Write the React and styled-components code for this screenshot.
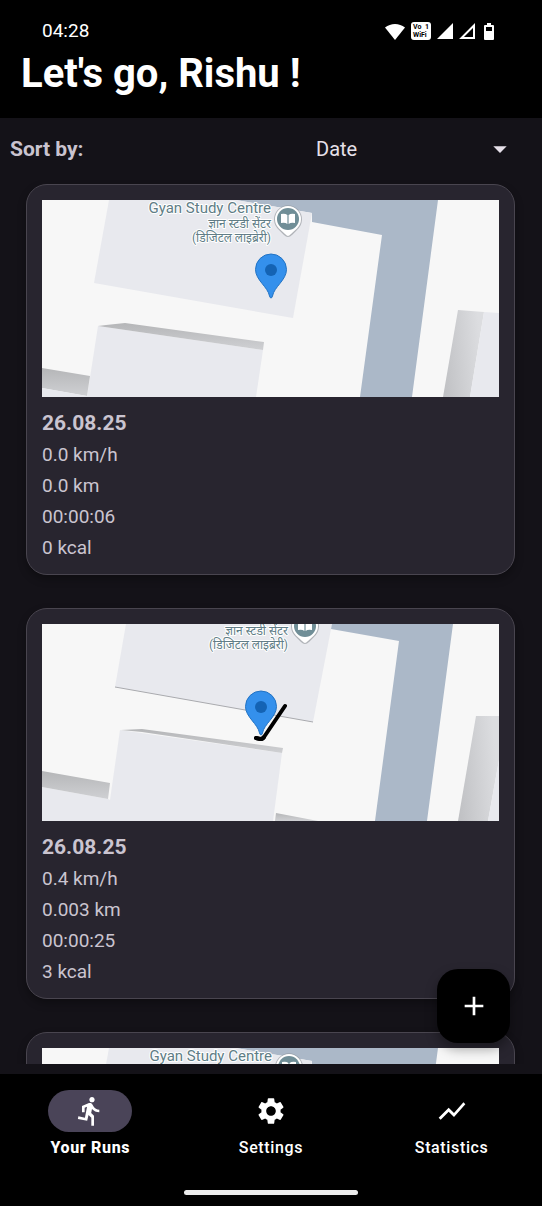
import React, { useState } from "react";
import styled, { createGlobalStyle } from "styled-components";
import { MdAdd, MdArrowDropDown, MdDirectionsRun, MdSettings, MdShowChart } from "react-icons/md";

const color = {
  bar: "#000000",
  page: "#141218",
  card: "#28252f",
  outline: "#49454f",
  text: "#cac4d0",
  bright: "#e6e0e9",
  pill: "#4a4458",
};

const GlobalStyle = createGlobalStyle`
  *, *::before, *::after { box-sizing: border-box; }
  body {
    margin: 0;
    background: ${color.page};
    color: ${color.text};
    font-family: Roboto, "Noto Sans", sans-serif;
  }
`;

const Shell = styled.div`
  display: flex;
  flex-direction: column;
  height: 100vh;
  overflow: hidden;
`;

const Header = styled.header`
  background: ${color.bar};
  color: #fff;
  padding: 20px 0 20px;
`;

const StatusBar = styled.div`
  display: flex;
  align-items: center;
  justify-content: space-between;
  height: 22px;
  padding: 0 48px 0 42px;
`;

const Clock = styled.time`
  font-size: 19px;
  line-height: 22px;
  font-weight: 400;
`;

const StatusIcons = styled.div`
  display: flex;
  align-items: center;
  gap: 6px;
  svg { display: block; }
`;

const CallBadge = styled.div`
  width: 20px;
  height: 18px;
  padding: 1px 2px;
  border-radius: 3px;
  background: #fff;
  color: #000;
  font-size: 7px;
  line-height: 8px;
  font-weight: 700;
`;

const BadgeLine = styled.div`
  display: flex;
  justify-content: space-between;
`;

const Title = styled.h1`
  margin: 8px 0 0;
  padding: 0 21px;
  font-size: 40px;
  line-height: 48px;
  font-weight: 700;
`;

const Main = styled.main`
  position: relative;
  display: flex;
  flex: 1;
  flex-direction: column;
  min-height: 0;
  padding-bottom: 10px;
`;

const SortRow = styled.div`
  display: flex;
  align-items: center;
  justify-content: space-between;
  height: 62px;
  flex-shrink: 0;
  padding: 0 26px 0 10px;
`;

const SortLabel = styled.label`
  font-size: 21px;
  line-height: 28px;
  font-weight: 700;
`;

const SelectBox = styled.div`
  display: grid;
  grid-template-columns: 1fr 32px;
  align-items: center;
  width: 200px;
  color: ${color.bright};
  svg {
    grid-area: 1 / 2;
    pointer-events: none;
  }
`;

const SortSelect = styled.select`
  grid-area: 1 / 1 / 2 / 3;
  appearance: none;
  height: 40px;
  padding: 0;
  border: 0;
  background: transparent;
  color: inherit;
  font: 400 20px/28px Roboto, sans-serif;
`;

const RunList = styled.ul`
  display: flex;
  flex: 1;
  flex-direction: column;
  gap: 33px;
  min-height: 0;
  margin: 0;
  padding: 4px 27px 16px 26px;
  overflow-y: auto;
  scrollbar-width: none;
  list-style: none;
`;

const RunCard = styled.li`
  flex-shrink: 0;
  padding: 15px 15px 11px;
  border: 1px solid ${color.outline};
  border-radius: 21px;
  background: ${color.card};
  box-shadow: 0 4px 8px rgba(0, 0, 0, 0.3);
`;

const MapFrame = styled.svg`
  display: block;
  width: 100%;
  aspect-ratio: 457 / 197;
  margin-bottom: 10px;
`;

const MapText = styled.text`
  fill: #607d86;
  stroke: #fff;
  stroke-width: 2px;
  stroke-linejoin: round;
  paint-order: stroke;
  text-anchor: end;
  font-family: Roboto, "Noto Sans", "Noto Sans Devanagari", sans-serif;
  font-size: ${(p) => (p.$small ? 12 : 15)}px;
`;

const RunDate = styled.h2`
  margin: 0;
  font-size: 21px;
  line-height: 32px;
  font-weight: 700;
`;

const Stat = styled.p`
  margin: 0;
  font-size: 19px;
  line-height: 31px;
`;

const AddButton = styled.button`
  position: absolute;
  right: 32px;
  bottom: 31px;
  display: grid;
  place-items: center;
  width: 73px;
  height: 74px;
  padding: 0;
  border: 0;
  border-radius: 21px;
  background: ${color.bar};
  color: #fff;
  box-shadow: 0 6px 12px rgba(0, 0, 0, 0.35);
`;

const BottomBar = styled.footer`
  background: ${color.bar};
  padding: 16px 0 11px;
`;

const Tabs = styled.nav`
  display: grid;
  grid-template-columns: repeat(3, 1fr);
`;

const Tab = styled.a`
  display: flex;
  flex-direction: column;
  align-items: center;
  gap: 5px;
  color: #fff;
  font-size: 16px;
  line-height: 22px;
  font-weight: ${(p) => (p.$active ? 800 : 500)};
  letter-spacing: 0.04em;
  text-decoration: none;
`;

const TabIcon = styled.span`
  display: grid;
  place-items: center;
  width: 84px;
  height: 42px;
  border-radius: 21px;
  background: ${(p) => (p.$active ? color.pill : "transparent")};
`;

const HomeHandle = styled.div`
  width: 32%;
  height: 5px;
  margin: 31px auto 0;
  border-radius: 3px;
  background: #ececec;
`;

const firstMap = {
  shapes: [
    ["road", "194,0 396,0 370,197 318,197 340,35 270,22 270,13"],
    ["block", "67,0 194,0 270,13 251,118 52,83"],
    ["block", "56,126 221,150 214,197 45,197"],
    ["wallTop", "56,126 64,125 83,123 222,142 221,150"],
    ["wallTop", "0,168 48,176 45,196 0,188"],
    ["block", "0,188 45,196 45,197 0,197"],
    ["wallSide", "416,110 442,112 428,197 401,197"],
    ["block", "442,112 457,113 457,197 428,197"],
  ],
  label: { x: 229, y: 13, name: "Gyan Study Centre", local: ["ज्ञान स्टडी सेंटर", "(डिजिटल लाइब्रेरी)"] },
  pin: { x: 229, y: 54 },
};

const secondMap = {
  shapes: [
    ["road", "289,0 411,0 385,197 333,197 357,17 289,5"],
    ["block", "84,0 290,0 271,98 73,63"],
    ["block", "0,163 66,175 110,197 0,197"],
    ["block", "78,106 240,129 231,197 65,197"],
    ["wallTop", "79,106 100,105 241,124 240,129 100,108"],
    ["wallTop", "0,147 68,159 66,175 0,163"],
    ["wallTop", "234,189 276,197 233,197"],
    ["wallSide", "434,92 457,92 457,136 446,197 416,197"],
    ["block", "457,136 457,197 446,197"],
  ],
  edge: "M73 63 271 98",
  label: { x: 246, y: -4, local: ["ज्ञान स्टडी सेंटर", "(डिजिटल लाइब्रेरी)"] },
  pin: { x: 219, y: 67 },
  route: "M243 82 222 113Q221 115 218 115L214 114",
};

const runs = [
  { id: 1, map: firstMap, date: "26.08.25", stats: ["0.0 km/h", "0.0 km", "00:00:06", "0 kcal"] },
  { id: 2, map: secondMap, date: "26.08.25", stats: ["0.4 km/h", "0.003 km", "00:00:25", "3 kcal"] },
  { id: 3, map: { ...firstMap, label: { x: 230, y: 13, name: "Gyan Study Centre", local: [] } }, stats: [] },
];

function RunMap({ id, map }) {
  const fills = {
    road: "#abb8c8",
    block: "#e8e9ee",
    wallTop: `url(#top${id})`,
    wallSide: `url(#side${id})`,
  };
  const { label, pin } = map;
  return (
    <MapFrame viewBox="0 0 457 197" role="img" aria-label="Run map">
      <defs>
        <linearGradient id={`top${id}`} x1="0" y1="0" x2="0" y2="1">
          <stop offset="0" stopColor="#b5b6b8" />
          <stop offset="1" stopColor="#cfd0d3" />
        </linearGradient>
        <linearGradient id={`side${id}`} x1="0" y1="1" x2="1" y2="0.8">
          <stop offset="0" stopColor="#bfc0c3" />
          <stop offset="1" stopColor="#dcdde0" />
        </linearGradient>
      </defs>
      <rect width="457" height="197" fill="#f7f7f7" />
      {map.shapes.map(([kind, points]) => (
        <polygon key={points} points={points} fill={fills[kind]} />
      ))}
      {map.edge && <path d={map.edge} stroke="#a9aaae" strokeWidth="1" />}
      {label.name && <MapText x={label.x} y={label.y}>{label.name}</MapText>}
      {label.local.map((line, i) => (
        <MapText key={line} x={label.x} y={label.y + 15 + i * 14} $small>{line}</MapText>
      ))}
      <g transform={`translate(${label.x + 17} ${label.y + 6})`}>
        <path d="M0 18Q-2 18-4 16L-9 11A14 14 0 1 1 9 11L4 16Q2 18 0 18Z" fill="#8b9094" opacity="0.6" />
        <path d="M0 17Q-1 17-3 15L-9 9.500A13 13 0 1 1 9 9.500L3 15Q1 17 0 17Z" fill="#fff" />
        <circle r="11" fill="#708e97" />
        <path d="M-7-5Q-3-6-0.600-4V5Q-3 3-7 4ZM7-5Q3-6 0.600-4V5Q3 3 7 4Z" fill="#fff" />
      </g>
      {map.route && (
        <path d={map.route} fill="none" stroke="#000" strokeWidth="4" strokeLinecap="round" strokeLinejoin="round" />
      )}
      <g transform={`translate(${pin.x} ${pin.y})`}>
        <path
          d="M0 44Q-1 44-1.500 42C-3 33-15.500 26-15.500 15.500A15.500 15.500 0 0 1 15.500 15.500C15.500 26 3 33 1.500 42Q1 44 0 44Z"
          fill="#3490ec"
          stroke="#2273c4"
          strokeWidth="1"
        />
        <circle cy="16" r="6" fill="#1463b4" />
      </g>
      {map.route && (
        <path d="M222 113Q221 115 218 115L214 114" fill="none" stroke="#000" strokeWidth="4" strokeLinecap="round" />
      )}
    </MapFrame>
  );
}

function PhoneStatus() {
  return (
    <StatusBar>
      <Clock>04:28</Clock>
      <StatusIcons>
        <svg width="20" height="17" viewBox="0 0 20 17" aria-hidden="true">
          <path d="M10 17 0 4.500Q4.500 1 10 1T20 4.500Z" fill="#fff" />
        </svg>
        <CallBadge>
          <BadgeLine><span>Vo</span><span>1</span></BadgeLine>
          <BadgeLine>WiFi</BadgeLine>
        </CallBadge>
        <svg width="16" height="17" viewBox="0 0 16 17" aria-hidden="true">
          <path d="M16 0V16H0Z" fill="#fff" />
        </svg>
        <svg width="16" height="17" viewBox="0 0 16 17" aria-hidden="true">
          <path d="M15 2.500V15H2.500Z" fill="none" stroke="#fff" strokeWidth="2" />
        </svg>
        <svg width="13" height="17" viewBox="0 0 13 17" aria-hidden="true">
          <path
            d="M6 0H10V2H12Q13 2 13 3V16Q13 17 12 17H4Q3 17 3 16V3Q3 2 4 2H6ZM5 4V8H11V4Z"
            fill="#fff"
            fillRule="evenodd"
          />
        </svg>
      </StatusIcons>
    </StatusBar>
  );
}

const tabs = [
  { name: "Your Runs", href: "#runs", Icon: MdDirectionsRun },
  { name: "Settings", href: "#settings", Icon: MdSettings },
  { name: "Statistics", href: "#statistics", Icon: MdShowChart },
];

export default function App() {
  const [sort, setSort] = useState("Date");
  const [current, setCurrent] = useState("Your Runs");
  return (
    <Shell>
      <GlobalStyle />
      <Header>
        <PhoneStatus />
        <Title>Let's go, Rishu !</Title>
      </Header>
      <Main>
        <SortRow>
          <SortLabel htmlFor="sort">Sort by:</SortLabel>
          <SelectBox>
            <SortSelect id="sort" value={sort} onChange={(e) => setSort(e.target.value)}>
              <option>Date</option>
              <option>Running Time</option>
              <option>Distance</option>
              <option>Average Speed</option>
              <option>Calories Burned</option>
            </SortSelect>
            <MdArrowDropDown size={32} aria-hidden="true" />
          </SelectBox>
        </SortRow>
        <RunList>
          {runs.map((run) => (
            <RunCard key={run.id}>
              <RunMap id={run.id} map={run.map} />
              {run.date && <RunDate>{run.date}</RunDate>}
              {run.stats.map((stat) => (
                <Stat key={stat}>{stat}</Stat>
              ))}
            </RunCard>
          ))}
        </RunList>
        <AddButton type="button" aria-label="Add run">
          <MdAdd size={32} />
        </AddButton>
      </Main>
      <BottomBar>
        <Tabs>
          {tabs.map(({ name, href, Icon }) => (
            <Tab key={name} href={href} $active={name === current} onClick={() => setCurrent(name)}>
              <TabIcon $active={name === current}>
                <Icon size={32} />
              </TabIcon>
              {name}
            </Tab>
          ))}
        </Tabs>
        <HomeHandle />
      </BottomBar>
    </Shell>
  );
}
